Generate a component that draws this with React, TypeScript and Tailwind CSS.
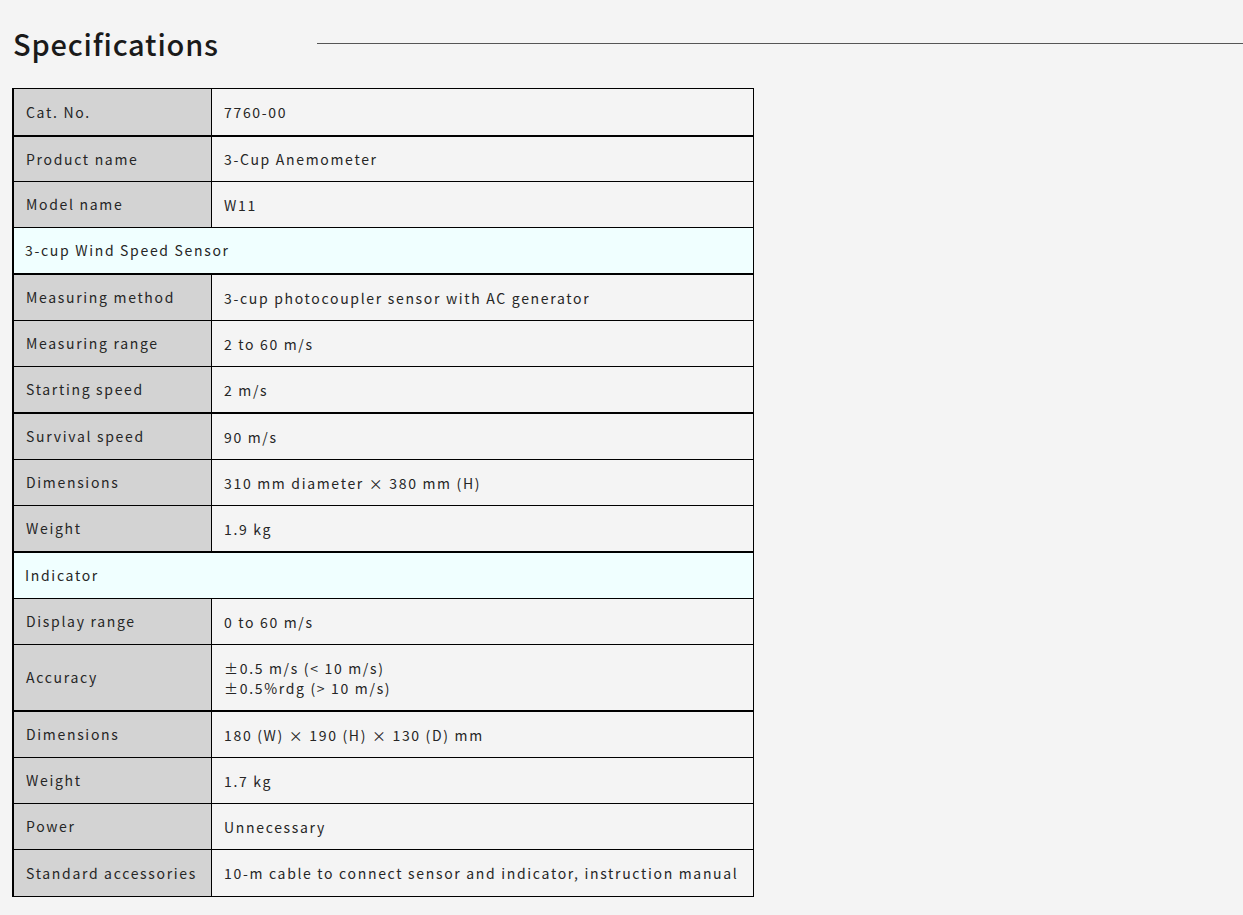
import React from 'react';

type Row =
  | { kind: 'spec'; label: string; value: React.ReactNode; h: number; thick?: boolean }
  | { kind: 'section'; label: string; h: number; thick?: boolean };

const rows: Row[] = [
  { kind: 'spec', label: 'Cat. No.', value: '7760-00', h: 47 },
  { kind: 'spec', label: 'Product name', value: '3-Cup Anemometer', h: 46, thick: true },
  { kind: 'spec', label: 'Model name', value: 'W11', h: 46 },
  { kind: 'section', label: '3-cup Wind Speed Sensor', h: 46 },
  { kind: 'spec', label: 'Measuring method', value: '3-cup photocoupler sensor with AC generator', h: 47, thick: true },
  { kind: 'spec', label: 'Measuring range', value: '2 to 60 m/s', h: 46 },
  { kind: 'spec', label: 'Starting speed', value: '2 m/s', h: 46 },
  { kind: 'spec', label: 'Survival speed', value: '90 m/s', h: 47, thick: true },
  { kind: 'spec', label: 'Dimensions', value: '310 mm diameter × 380 mm (H)', h: 46 },
  { kind: 'spec', label: 'Weight', value: '1.9 kg', h: 46 },
  { kind: 'section', label: 'Indicator', h: 47, thick: true },
  { kind: 'spec', label: 'Display range', value: '0 to 60 m/s', h: 46 },
  {
    kind: 'spec',
    label: 'Accuracy',
    value: (
      <>
        ±0.5 m/s (&lt; 10 m/s)
        <br />
        ±0.5%rdg (&gt; 10 m/s)
      </>
    ),
    h: 66,
  },
  { kind: 'spec', label: 'Dimensions', value: '180 (W) × 190 (H) × 130 (D) mm', h: 47, thick: true },
  { kind: 'spec', label: 'Weight', value: '1.7 kg', h: 46 },
  { kind: 'spec', label: 'Power', value: 'Unnecessary', h: 46 },
  { kind: 'spec', label: 'Standard accessories', value: '10-m cable to connect sensor and indicator, instruction manual', h: 48 },
];

const font = { fontFamily: '"Noto Sans CJK JP", "Noto Sans", sans-serif' };

export default function App() {
  return (
    <div className="min-h-screen w-full bg-[#f4f4f4] text-[#262626]" style={font}>
      <div className="flex items-center pt-[24px]">
        <h2 className="w-[317px] shrink-0 pl-[13px] text-[29px] font-medium leading-[38px] tracking-[0.8px] text-[#1a1a1a]">
          Specifications
        </h2>
        <div className="h-px flex-1 bg-[#555]" />
      </div>

      <div className="ml-[12px] mt-[26px] w-[742px] border-l-2 border-r border-black">
        {rows.map((row, i) => {
          const last = i === rows.length - 1;
          const border = `${row.thick ? 'border-t-2' : 'border-t'} ${last ? 'border-b' : ''} border-black`;
          if (row.kind === 'section') {
            return (
              <div
                key={i}
                className={`flex items-center bg-[#f0ffff] pl-[11px] text-[14px] tracking-[1.68px] ${border}`}
                style={{ height: row.h }}
              >
                {row.label}
              </div>
            );
          }
          return (
            <div key={i} className={`flex ${border}`} style={{ height: row.h }}>
              <div className="flex w-[198px] shrink-0 items-center border-r border-black bg-[#d3d3d3] pl-[12px] text-[14px] tracking-[1.68px]">
                {row.label}
              </div>
              <div className="flex flex-1 items-center bg-[#f4f4f4] pl-[12px] text-[14px] leading-[20px] tracking-[1.68px]">
                <div>{row.value}</div>
              </div>
            </div>
          );
        })}
      </div>
    </div>
  );
}
